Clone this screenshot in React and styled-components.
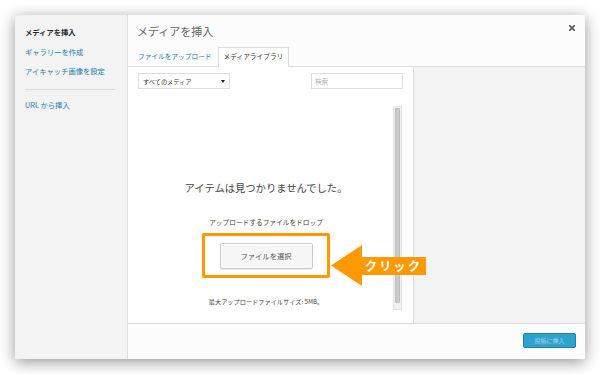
import React from 'react';
import styled, { createGlobalStyle } from 'styled-components';

const Global = createGlobalStyle`
  html, body { margin: 0; padding: 0; background: #fff; }
  body {
    font-family: "Noto Sans CJK JP", "Noto Sans", sans-serif;
    width: 600px; height: 374px; overflow: hidden;
  }
  * { box-sizing: border-box; }
`;

const Page = styled.div`
  padding: 15px;
`;

const Modal = styled.div`
  width: 570px;
  height: 344px;
  display: flex;
  background: #fcfcfc;
  box-shadow: 0 3px 14px rgba(0, 0, 0, 0.42);
`;

const MenuPanel = styled.nav`
  width: 113px;
  flex-shrink: 0;
  background: #f3f3f3;
  border-right: 1px solid #ddd;
  padding: 8px 12px 0 10px;
  display: flex;
  flex-direction: column;
`;

const MenuItem = styled.a`
  display: block;
  font-size: 7.3px;
  line-height: 19.5px;
  white-space: nowrap;
  text-decoration: none;
  color: ${(p) => (p.$active ? '#23282d' : '#1a7db0')};
  font-weight: ${(p) => (p.$active ? 700 : 400)};
`;

const MenuSep = styled.div`
  height: 1px;
  background: #dcdcdc;
  margin: 7px 0 6.5px;
`;

const Main = styled.div`
  flex: 1;
  display: flex;
  flex-direction: column;
  min-width: 0;
`;

const TitleRow = styled.div`
  height: 32px;
  display: flex;
  justify-content: space-between;
  padding-left: 9px;
`;

const Title = styled.h1`
  margin: 0;
  font-size: 11px;
  line-height: 32px;
  font-weight: 400;
  color: #666;
`;

const CloseButton = styled.button`
  border: 0;
  background: none;
  padding: 0;
  width: 6px;
  height: 6px;
  margin: 10px 10px 0 0;
  display: flex;
  cursor: pointer;
`;

const Tabs = styled.div`
  height: 20px;
  display: flex;
  align-items: flex-end;
  padding-left: 4px;
  border-bottom: 1px solid #ddd;
`;

const Tab = styled.a`
  height: 20px;
  margin-bottom: -1px;
  padding: 0 5px;
  font-size: 6.7px;
  line-height: 17px;
  white-space: nowrap;
  text-decoration: none;
  border: 1px solid ${(p) => (p.$active ? '#ddd' : 'transparent')};
  border-bottom: 0;
  background: ${(p) => (p.$active ? '#fff' : 'transparent')};
  color: ${(p) => (p.$active ? '#333' : '#1a7db0')};
`;

const Body = styled.div`
  flex: 1;
  display: flex;
  min-height: 0;
`;

const Content = styled.div`
  flex: 1;
  background: #fff;
  display: flex;
  flex-direction: column;
`;

const Toolbar = styled.div`
  display: flex;
  justify-content: space-between;
  padding: 6px 10px 0 10px;
`;

const FilterSelect = styled.div`
  width: 92px;
  height: 16px;
  border: 1px solid #ddd;
  background: #fff;
  display: flex;
  align-items: center;
  justify-content: space-between;
  padding: 0 4px 0 4px;
  font-size: 6.2px;
  color: #333;
`;

const SearchInput = styled.input`
  width: 92px;
  height: 16px;
  border: 1px solid #ddd;
  background: #fff;
  padding: 0 3px;
  font-family: inherit;
  font-size: 6.5px;
  outline: none;
  &::placeholder { color: #b4b4b4; }
`;

const Browse = styled.div`
  flex: 1;
  display: flex;
  margin-top: 17px;
  padding-bottom: 13px;
`;

const Center = styled.div`
  flex: 1;
  padding-left: 11px;
  display: flex;
  flex-direction: column;
  align-items: center;
`;

const EmptyMsg = styled.p`
  margin: 75px 0 0;
  font-size: 10.3px;
  line-height: 14px;
  color: #444;
  white-space: nowrap;
`;

const SmallText = styled.p`
  margin: ${(p) => p.$mt}px 0 0;
  font-size: ${(p) => p.$size}px;
  line-height: 10px;
  color: #444;
  white-space: nowrap;
`;

const Highlight = styled.div`
  position: relative;
  margin-top: 6px;
  width: 128px;
  height: 45px;
  border: 3px solid #f90;
  border-radius: 2px;
  display: flex;
  align-items: center;
  justify-content: center;
`;

const SelectButton = styled.button`
  width: 93px;
  height: 26px;
  border: 1px solid #ccc;
  border-radius: 2px;
  background: #f7f7f7;
  box-shadow: inset 0 1px 0 #fff, 0 1px 0 rgba(0, 0, 0, 0.08);
  font-family: inherit;
  font-size: 7.3px;
  color: #555;
  padding: 0;
`;

const Callout = styled.div`
  position: absolute;
  left: calc(100% + 4px);
  top: 9px;
  display: flex;
  align-items: center;
  pointer-events: none;
`;

const CalloutLabel = styled.span`
  height: 18px;
  width: 65px;
  margin-left: -1px;
  background: #f90;
  color: #fff;
  font-size: 12px;
  font-weight: 700;
  line-height: 18px;
  letter-spacing: 2.3px;
  padding-left: 4px;
  white-space: nowrap;
`;

const ScrollTrack = styled.div`
  width: 9px;
  margin-right: 11px;
  background: #f0f0f0;
  border: 1px solid #e4e4e4;
  padding: 1px;
`;

const ScrollThumb = styled.div`
  height: 195px;
  background: #cbcbcb;
  border: 1px solid #bebebe;
  border-radius: 1px;
`;

const SidePanel = styled.aside`
  width: 172px;
  flex-shrink: 0;
  background: #f3f3f3;
  border-left: 1px solid #ddd;
`;

const Footer = styled.div`
  height: 36px;
  border-top: 1px solid #ddd;
  background: #fcfcfc;
  display: flex;
  justify-content: flex-end;
  align-items: flex-start;
  padding: 9px 9px 0 0;
`;

const PrimaryButton = styled.button`
  width: 53px;
  height: 15px;
  border: 1px solid #1b7fb0;
  border-radius: 2px;
  background: #2ea2cc;
  color: #a5d5ea;
  font-family: inherit;
  font-size: 6px;
  padding: 0;
`;

export default function App() {
  return (
    <>
      <Global />
      <Page>
        <Modal>
          <MenuPanel>
            <MenuItem $active>メディアを挿入</MenuItem>
            <MenuItem>ギャラリーを作成</MenuItem>
            <MenuItem>アイキャッチ画像を設定</MenuItem>
            <MenuSep />
            <MenuItem>URL から挿入</MenuItem>
          </MenuPanel>
          <Main>
            <TitleRow>
              <Title>メディアを挿入</Title>
              <CloseButton aria-label="閉じる">
                <svg width="6" height="6" viewBox="0 0 6 6">
                  <path d="M0.6 0.6 L5.4 5.4 M5.4 0.6 L0.6 5.4" stroke="#555d66" strokeWidth="1.7" strokeLinecap="square" />
                </svg>
              </CloseButton>
            </TitleRow>
            <Tabs>
              <Tab>ファイルをアップロード</Tab>
              <Tab $active>メディアライブラリ</Tab>
            </Tabs>
            <Body>
              <Content>
                <Toolbar>
                  <FilterSelect>
                    <span>すべてのメディア</span>
                    <svg width="4" height="3" viewBox="0 0 4 3">
                      <path d="M0 0 H4 L2 3 Z" fill="#222" />
                    </svg>
                  </FilterSelect>
                  <SearchInput placeholder="検索" />
                </Toolbar>
                <Browse>
                  <Center>
                    <EmptyMsg>アイテムは見つかりませんでした。</EmptyMsg>
                    <SmallText $mt={22} $size={6.7}>アップロードするファイルをドロップ</SmallText>
                    <Highlight>
                      <SelectButton>ファイルを選択</SelectButton>
                      <Callout>
                        <svg width="31" height="41" viewBox="0 0 31 41">
                          <polygon points="0,20.5 31,0 31,41" fill="#f90" />
                        </svg>
                        <CalloutLabel>クリック</CalloutLabel>
                      </Callout>
                    </Highlight>
                    <SmallText $mt={19} $size={6.2}>最大アップロードファイルサイズ: 5MB。</SmallText>
                  </Center>
                  <ScrollTrack>
                    <ScrollThumb />
                  </ScrollTrack>
                </Browse>
              </Content>
              <SidePanel />
            </Body>
            <Footer>
              <PrimaryButton>投稿に挿入</PrimaryButton>
            </Footer>
          </Main>
        </Modal>
      </Page>
    </>
  );
}
